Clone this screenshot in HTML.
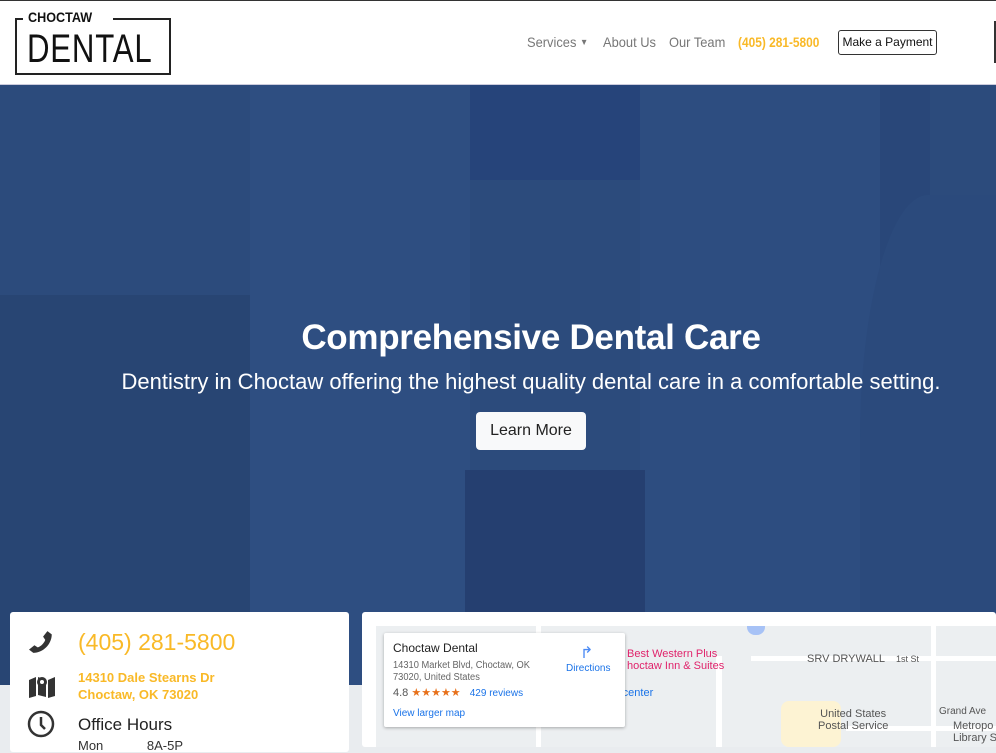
<!DOCTYPE html>
<html><head><meta charset="utf-8"><style>
*{margin:0;padding:0;box-sizing:border-box}
body{width:996px;height:747px;overflow:hidden;font-family:"Liberation Sans",sans-serif;background:#e9ecef;position:relative}
.top{position:absolute;left:0;top:0;width:996px;height:85px;background:#fff;border-top:1px solid #333;border-bottom:1px solid #ccd}
.logo{position:absolute;left:15px;top:17px;width:156px;height:57px;border:2px solid #222;border-top:none}
.logo:before{content:"";position:absolute;left:-2px;top:0;width:8px;border-top:2px solid #222}
.logo:after{content:"";position:absolute;right:-2px;top:0;width:58px;border-top:2px solid #222}
.logo .c{position:absolute;left:11px;top:-9px;font-weight:bold;font-size:14px;color:#111;transform:scaleX(.9);transform-origin:left}
.logo .d{position:absolute;left:10px;top:9px;font-size:40px;color:#111;letter-spacing:1px;transform:scaleX(.78);transform-origin:left;-webkit-text-stroke:0}
.nav{position:absolute;top:33px;font-size:14px;color:#777;transform:scaleX(.92);transform-origin:left}
.pay{position:absolute;left:838px;top:29px;width:99px;height:25px;border:1px solid #333;border-radius:3px;font-size:12px;color:#111;text-align:center;line-height:23px}
.hero{position:absolute;left:0;top:85px;width:996px;height:600px;background:#2c4b7c;overflow:hidden}
.hero div.s{position:absolute}
h1{position:absolute;left:0;width:1062px;top:318px;text-align:center;font-size:35px;color:#fff;font-weight:bold;letter-spacing:-.3px}
.sub{position:absolute;left:0;width:1062px;top:369px;text-align:center;font-size:22px;color:#fff}
.btn{position:absolute;left:476px;top:412px;width:110px;height:38px;background:#f8f9fa;border-radius:4px;font-size:16px;color:#222;text-align:center;line-height:38px}
.card{position:absolute;top:612px;background:#fff;border-radius:3px}
.map{position:absolute;left:376px;top:626px;width:620px;height:121px;background:#eceff1;overflow:hidden}
</style></head><body>
<div class="top">
<div class="logo"><span class="c">CHOCTAW</span><span class="d">DENTAL</span></div>
<span class="nav" style="left:527px">Services <span style="font-size:9px;vertical-align:2px">▼</span></span>
<span class="nav" style="left:603px">About Us</span>
<span class="nav" style="left:669px">Our Team</span>
<span class="nav" style="left:738px;color:#f9b927;font-weight:bold;transform:scaleX(.85)">(405) 281-5800</span>
<div class="pay">Make a Payment</div>
<div style="position:absolute;left:994px;top:20px;width:2px;height:42px;background:#333"></div>
</div>
<div class="hero">
<div class="s" style="left:470px;top:0;width:170px;height:95px;background:#26447a"></div>
<div class="s" style="left:250px;top:0;width:220px;height:600px;background:#2e4e81"></div>
<div class="s" style="left:640px;top:0;width:240px;height:600px;background:#2d4d80"></div>
<div class="s" style="left:880px;top:0;width:50px;height:260px;background:#294779"></div>
<div class="s" style="left:465px;top:385px;width:180px;height:215px;background:#253f70"></div>
<div class="s" style="left:0;top:210px;width:250px;height:390px;background:#284573"></div>
<div class="s" style="left:860px;top:110px;width:136px;height:490px;border-radius:50% 0 0 0;background:#2b4a7c"></div>
</div>
<h1>Comprehensive Dental Care</h1>
<div class="sub">Dentistry in Choctaw offering the highest quality dental care in a comfortable setting.</div>
<div class="btn">Learn More</div>
<div class="card" style="left:10px;width:339px;height:140px">
<svg style="position:absolute;left:19px;top:17px" width="26" height="26" viewBox="0 0 24 24"><path d="M20 22c-9 0-17-8-17-17l4-3 4 5-2 3c1 3 4 6 7 7l3-2 5 4z" fill="#333" transform="scale(-1,1) translate(-24,0)"/></svg>
<div style="position:absolute;left:68px;top:17px;font-size:23px;color:#f9b927">(405) 281-5800</div>
<svg style="position:absolute;left:18px;top:62px" width="28" height="24" viewBox="0 0 28 24"><path d="M1 6l7-3v19l-7 2zM10 3l8 3v17l-8-2zM20 6l7-3v19l-7 2z" fill="#333"/><circle cx="14" cy="8" r="5" fill="#333"/><circle cx="14" cy="8" r="2" fill="#fff"/></svg>
<div style="position:absolute;left:68px;top:57px;font-size:13px;line-height:17px;color:#f9b927;font-weight:bold">14310 Dale Stearns Dr<br>Choctaw, OK 73020</div>
<svg style="position:absolute;left:17px;top:98px" width="28" height="28" viewBox="0 0 28 28"><circle cx="14" cy="14" r="12" fill="none" stroke="#333" stroke-width="2.5"/><path d="M14 7v8l4 4" stroke="#333" stroke-width="2.5" fill="none"/></svg>
<div style="position:absolute;left:68px;top:103px;font-size:17px;color:#222">Office Hours</div>
<div style="position:absolute;left:68px;top:126px;font-size:13px;color:#333">Mon <span style="margin-left:40px">8A-5P</span></div>
</div>
<div class="card" style="left:362px;width:634px;height:135px"></div>
<div class="map">
<div style="position:absolute;left:160px;top:0;width:5px;height:121px;background:#fff"></div>
<div style="position:absolute;left:340px;top:30px;width:6px;height:91px;background:#fff"></div>
<div style="position:absolute;left:375px;top:30px;width:250px;height:5px;background:#fff"></div>
<div style="position:absolute;left:470px;top:100px;width:150px;height:5px;background:#fff"></div>
<div style="position:absolute;left:555px;top:0;width:5px;height:121px;background:#fff"></div>
<div style="position:absolute;left:405px;top:75px;width:60px;height:46px;background:#fdf3d3;border-radius:8px"></div>
<div style="position:absolute;left:371px;top:0;width:18px;height:9px;background:#a7c2f6;border-radius:0 0 8px 8px"></div>
<div style="position:absolute;left:251px;top:22px;font-size:11px;color:#e0236b;line-height:12px">Best Western Plus<br>hoctaw Inn &amp; Suites</div>
<div style="position:absolute;left:431px;top:27px;font-size:11px;color:#555">SRV DRYWALL</div>
<div style="position:absolute;left:243px;top:61px;font-size:11px;color:#1a73e8">rcenter</div>
<div style="position:absolute;left:442px;top:82px;font-size:11px;color:#555;text-align:center;line-height:12px">United States<br>Postal Service</div>
<div style="position:absolute;left:563px;top:80px;font-size:10px;color:#555">Grand Ave</div>
<div style="position:absolute;left:577px;top:94px;font-size:11px;color:#555;line-height:12px;white-space:nowrap">Metropo<br>Library Syste</div>
<div style="position:absolute;left:520px;top:28px;font-size:9px;color:#555">1st St</div>
</div>
<div style="position:absolute;left:384px;top:633px;width:241px;height:94px;background:#fff;box-shadow:0 1px 3px rgba(0,0,0,.3);border-radius:2px">
<div style="position:absolute;left:9px;top:8px;font-size:12px;color:#222">Choctaw Dental</div>
<div style="position:absolute;left:9px;top:27px;font-size:10px;color:#666;line-height:12px;transform:scaleX(.93);transform-origin:left">14310 Market Blvd, Choctaw, OK<br>73020, United States</div>
<div style="position:absolute;left:9px;top:53px;font-size:11px;color:#555">4.8 <span style="color:#e7711b">★★★★★</span> <span style="color:#1a73e8;margin-left:6px;font-size:10px">429 reviews</span></div>
<div style="position:absolute;left:9px;top:75px;font-size:10px;color:#1a73e8">View larger map</div>
<div style="position:absolute;left:196px;top:10px;font-size:16px;color:#4a8af4">↱</div>
<div style="position:absolute;left:182px;top:30px;font-size:10px;color:#1a73e8">Directions</div>
</div>
</body></html>
